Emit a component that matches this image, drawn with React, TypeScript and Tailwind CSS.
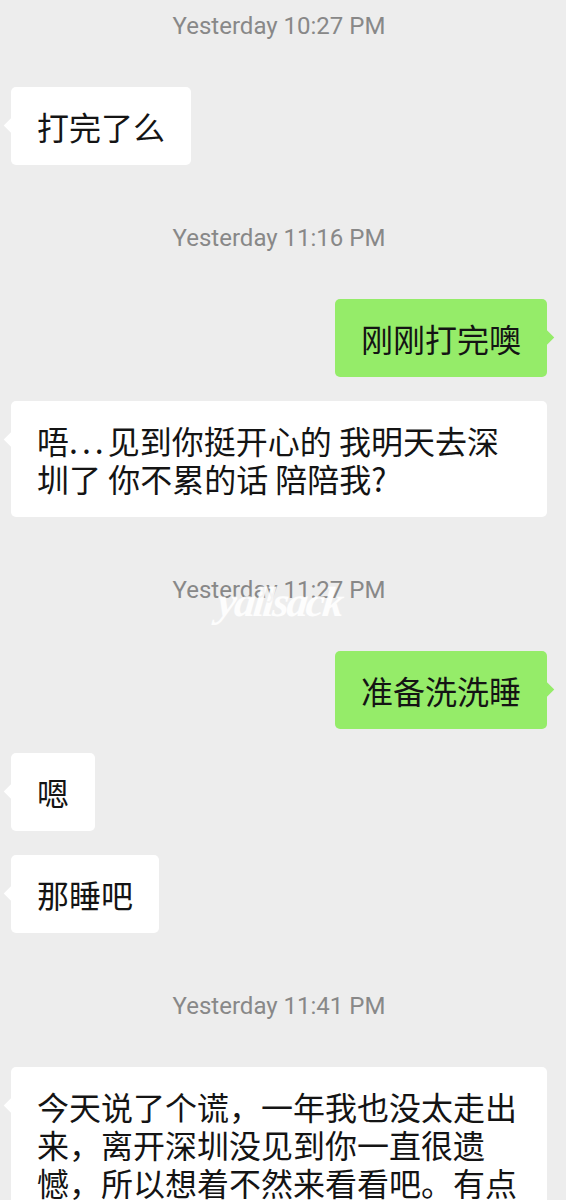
import type { ReactNode } from 'react'

const BODY_FONT = { fontFamily: '"Noto Sans CJK SC", "Noto Sans", sans-serif' }
const TIME_FONT = { fontFamily: 'Roboto, "Noto Sans", sans-serif' }

// 省略号的点在原图里间距比较宽
const Dots = () => <span className="tracking-[4px]">...</span>

type Msg =
  | { kind: 'time'; text: string }
  | { kind: 'in'; text: ReactNode }
  | { kind: 'out'; text: ReactNode }

const messages: Msg[] = [
  { kind: 'time', text: 'Yesterday 10:27 PM' },
  { kind: 'in', text: '打完了么' },
  { kind: 'time', text: 'Yesterday 11:16 PM' },
  { kind: 'out', text: '刚刚打完噢' },
  {
    kind: 'in',
    text: (
      <>
        唔<Dots />见到你挺开心的 我明天去深圳了 你不累的话 陪陪我?
      </>
    ),
  },
  { kind: 'time', text: 'Yesterday 11:27 PM' },
  { kind: 'out', text: '准备洗洗睡' },
  { kind: 'in', text: '嗯' },
  { kind: 'in', text: '那睡吧' },
  { kind: 'time', text: 'Yesterday 11:41 PM' },
  { kind: 'in', text: '今天说了个谎，一年我也没太走出来，离开深圳没见到你一直很遗憾，所以想着不然来看看吧。有点' },
]

function TimeStamp({ text }: { text: string }) {
  return (
    <div
      className="mt-[59px] text-center text-[24px] leading-[28px] text-[#888888] first:mt-0"
      style={TIME_FONT}
    >
      {text}
    </div>
  )
}

function Bubble({ text, mine }: { text: ReactNode; mine: boolean }) {
  return (
    <div className={mine ? 'flex justify-end' : 'flex justify-start'}>
      <div
        className={
          'relative max-w-full rounded-[5px] px-[26px] py-[20px] text-[32px] leading-[38px] text-[#141414] ' +
          (mine ? 'bg-[#95ec69]' : 'bg-white')
        }
        style={BODY_FONT}
      >
        <span
          className={
            'absolute top-[33px] h-[11px] w-[11px] rotate-45 ' +
            (mine ? 'right-[-5px] bg-[#95ec69]' : 'left-[-5px] bg-white')
          }
        />
        <span className="relative">{text}</span>
      </div>
    </div>
  )
}

export default function App() {
  return (
    <div className="relative h-[1200px] overflow-hidden bg-[#ededed]">
      <div className="flex flex-col pl-[11px] pr-[19px] pt-[12px]">
        {messages.map((m, i) => {
          if (m.kind === 'time') return <TimeStamp key={i} text={m.text} />
          const prev = messages[i - 1]
          return (
            <div key={i} className={prev && prev.kind === 'time' ? 'mt-[47px]' : 'mt-[24px]'}>
              <Bubble text={m.text} mine={m.kind === 'out'} />
            </div>
          )
        })}
      </div>

      {/* 水印 */}
      <div
        className="absolute left-[218px] top-[581px] -skew-x-6 text-[42px] font-bold italic leading-none tracking-[-2px] text-white/90"
        style={{ fontFamily: '"Liberation Serif", serif' }}
      >
        yallsack
      </div>
    </div>
  )
}
